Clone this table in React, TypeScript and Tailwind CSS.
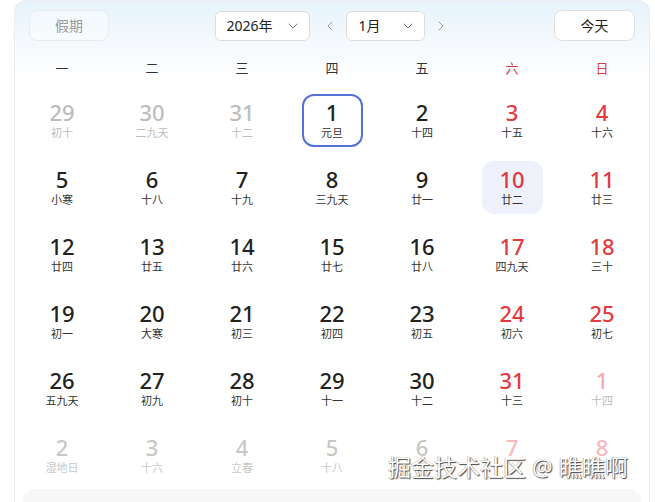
import { ChevronDown, ChevronLeft, ChevronRight } from 'lucide-react';

type Day = {
  n: number;
  lunar: string;
  other?: boolean;
  weekend?: boolean;
  selected?: boolean;
  today?: boolean;
  faded?: boolean;
};

const weekdays = ['一', '二', '三', '四', '五', '六', '日'];

// lunar text of the last three cells sits under the watermark
const raw: [number, string][] = [
  [29, '初十'], [30, '二九天'], [31, '十二'], [1, '元旦'], [2, '十四'], [3, '十五'], [4, '十六'],
  [5, '小寒'], [6, '十八'], [7, '十九'], [8, '三九天'], [9, '廿一'], [10, '廿二'], [11, '廿三'],
  [12, '廿四'], [13, '廿五'], [14, '廿六'], [15, '廿七'], [16, '廿八'], [17, '四九天'], [18, '三十'],
  [19, '初一'], [20, '大寒'], [21, '初三'], [22, '初四'], [23, '初五'], [24, '初六'], [25, '初七'],
  [26, '五九天'], [27, '初九'], [28, '初十'], [29, '十一'], [30, '十二'], [31, '十三'], [1, '十四'],
  [2, '湿地日'], [3, '十六'], [4, '立春'], [5, '十八'], [6, ''], [7, ''], [8, ''],
];

const days: Day[] = raw.map(([n, lunar], i) => ({
  n,
  lunar,
  other: i < 3 || i > 33,
  weekend: i % 7 >= 5,
  selected: i === 3,
  today: i === 12,
  faded: i >= 35,
}));

const rows = Array.from({ length: 6 }, (_, r) => days.slice(r * 7, r * 7 + 7));

function DayCell({ d }: { d: Day }) {
  let num = 'text-[#222]';
  let sub = 'text-[#333]';
  if (d.weekend) num = 'text-[#e23b3f]';
  if (d.other) {
    num = d.weekend ? 'text-[#f3aab0]' : 'text-[#bdbdbd]';
    sub = 'text-[#bdbdbd]';
  }
  if (d.faded && !d.weekend) {
    num = 'text-[#c8c8c8]';
    sub = 'text-[#c8c8c8]';
  }
  if (d.faded && d.weekend) {
    num = 'text-[#f5b9be]';
    sub = 'text-[#d0d0d0]';
  }

  let box = 'border-2 border-transparent';
  if (d.selected) box = 'border-2 border-[#5571d8]';
  if (d.today) box = 'border-2 border-transparent bg-[#eef0fc]';

  return (
    <div className="flex items-center justify-center">
      <div className={`flex h-[53px] w-[61px] flex-col items-center justify-center rounded-xl ${box}`}>
        <span className={`text-[22px] font-medium leading-[22px] ${num}`}>{d.n}</span>
        <span className={`mt-[3px] h-[14px] text-[11px] leading-[14px] ${sub}`}>{d.lunar}</span>
      </div>
    </div>
  );
}

export default function App() {
  return (
    <div
      className="relative h-[502px] w-[655px] overflow-hidden bg-white"
      style={{ fontFamily: '"Noto Sans", "Noto Sans CJK SC", sans-serif' }}
    >
      <div className="ml-[14px] mr-[5px] h-[520px] rounded-t-xl border border-b-0 border-[#ececec] bg-[linear-gradient(180deg,#e6f3fc_0px,#f4f9fd_40px,#ffffff_80px)]">
        {/* header */}
        <div className="flex items-center justify-between px-[14px] pt-[9px]">
          <button className="flex h-[31px] w-[80px] items-center justify-center rounded-lg border border-[#e8ecef] bg-white/40 text-[14px] text-[#9a9a9a]">
            假期
          </button>
          <div className="flex items-center">
            <div className="flex h-[30px] w-[95px] items-center justify-between rounded-md border border-[#dcdcdc] bg-white pl-[11px] pr-[8px] text-[14px] text-[#222]">
              <span>2026年</span>
              <ChevronDown className="h-4 w-4 text-[#777]" strokeWidth={1.5} />
            </div>
            <ChevronLeft className="ml-[12px] mr-[8px] h-4 w-4 text-[#999]" strokeWidth={1.5} />
            <div className="flex h-[30px] w-[79px] items-center justify-between rounded-md border border-[#dcdcdc] bg-white pl-[12px] pr-[8px] text-[14px] text-[#222]">
              <span>1月</span>
              <ChevronDown className="h-4 w-4 text-[#777]" strokeWidth={1.5} />
            </div>
            <ChevronRight className="ml-[8px] h-4 w-4 text-[#999]" strokeWidth={1.5} />
          </div>
          <button className="flex h-[31px] w-[81px] items-center justify-center rounded-lg border border-[#e0e0e0] bg-white text-[14px] text-[#222]">
            今天
          </button>
        </div>

        {/* weekdays */}
        <div className="mt-[15px] grid h-[26px] grid-cols-7 px-[2px]">
          {weekdays.map((w, i) => (
            <div
              key={w}
              className={`flex items-center justify-center text-[13px] ${i >= 5 ? 'text-[#e23b3f]' : 'text-[#333]'}`}
            >
              {w}
            </div>
          ))}
        </div>

        {/* days */}
        <div className="mt-[5px] px-[2px]">
          {rows.map((row, r) => (
            <div key={r} className="grid h-[67px] grid-cols-7">
              {row.map((d, i) => (
                <DayCell key={i} d={d} />
              ))}
            </div>
          ))}
        </div>

        <div className="mx-[8px] h-[30px] rounded-xl bg-[#f7f7f7]" />
      </div>

      {/* watermark */}
      <div className="absolute left-[388px] top-[452px] text-[23px] leading-[30px] text-white [text-shadow:1px_1px_1px_#444,-0.5px_-0.5px_0_#999]">
        掘金技术社区 @ 瞧瞧啊
      </div>
    </div>
  );
}
